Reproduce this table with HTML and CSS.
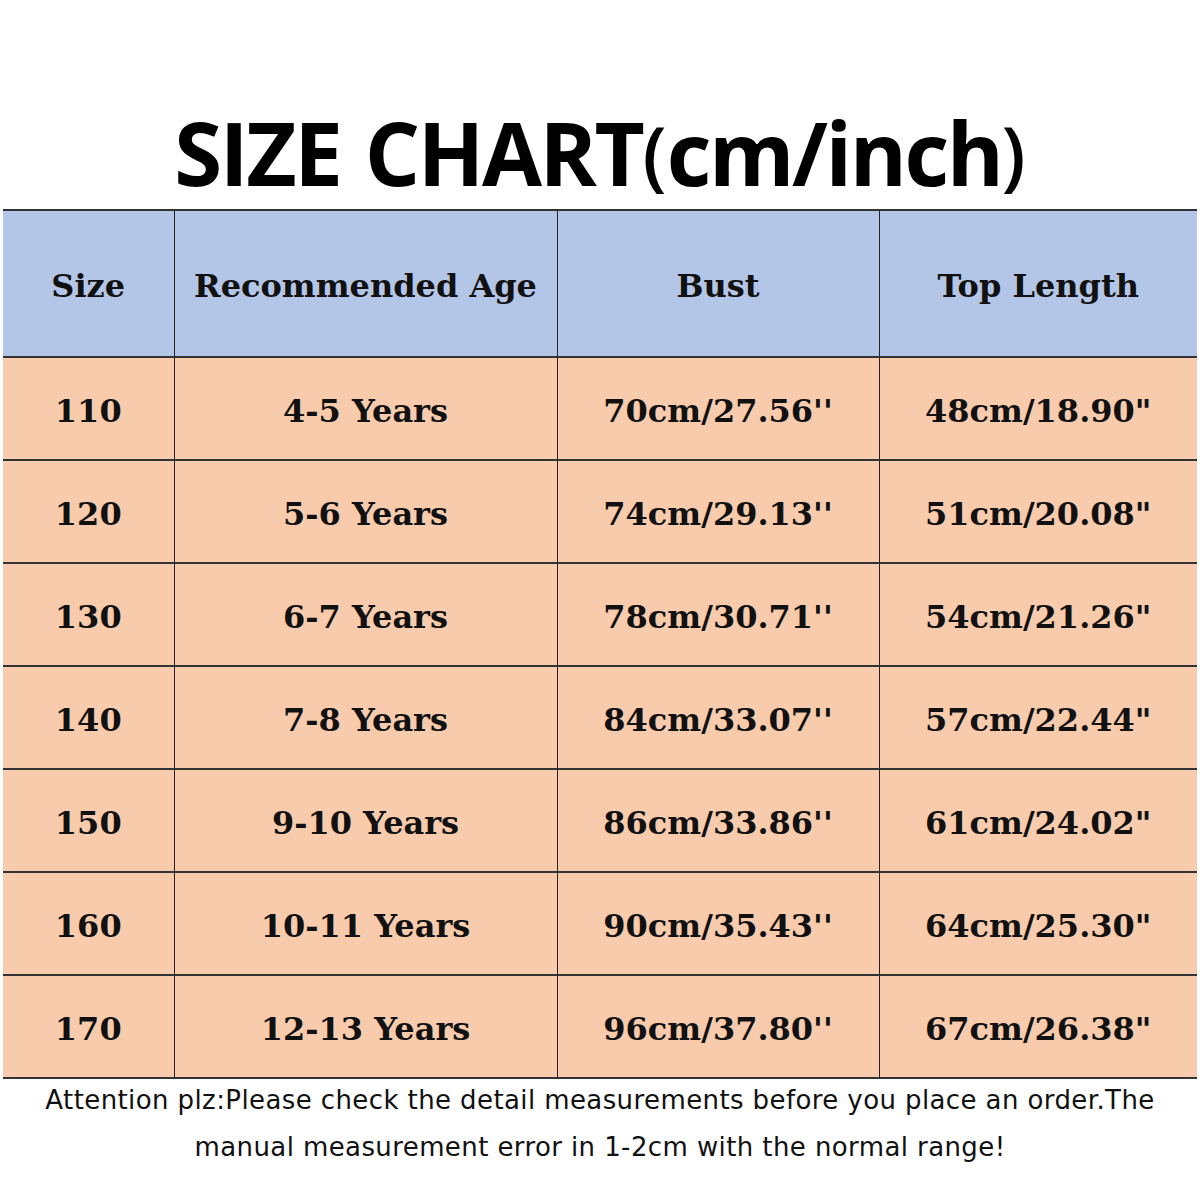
FILE: index.html
```html
<!DOCTYPE html>
<html>
<head>
<meta charset="utf-8">
<link rel="stylesheet" href="styles.css">
</head>
<body>
<div class="page">
  <h1 class="title">SIZE CHART<span class="paren">(</span>cm/inch<span class="paren">)</span></h1>
  <table class="chart">
    <colgroup>
      <col class="c1"><col class="c2"><col class="c3"><col class="c4">
    </colgroup>
    <thead>
      <tr><th>Size</th><th>Recommended Age</th><th>Bust</th><th>Top Length</th></tr>
    </thead>
    <tbody>
      <tr><td>110</td><td>4-5 Years</td><td>70cm/27.56''</td><td>48cm/18.90"</td></tr>
      <tr><td>120</td><td>5-6 Years</td><td>74cm/29.13''</td><td>51cm/20.08"</td></tr>
      <tr><td>130</td><td>6-7 Years</td><td>78cm/30.71''</td><td>54cm/21.26"</td></tr>
      <tr><td>140</td><td>7-8 Years</td><td>84cm/33.07''</td><td>57cm/22.44"</td></tr>
      <tr><td>150</td><td>9-10 Years</td><td>86cm/33.86''</td><td>61cm/24.02"</td></tr>
      <tr><td>160</td><td>10-11 Years</td><td>90cm/35.43''</td><td>64cm/25.30"</td></tr>
      <tr><td>170</td><td>12-13 Years</td><td>96cm/37.80''</td><td>67cm/26.38"</td></tr>
    </tbody>
  </table>
  <p class="note">Attention plz:Please check the detail measurements before you place an order.The<br>manual measurement error in 1-2cm with the normal range!</p>
</div>
</body>
</html>
```
FILE: styles.css
```css
html, body {
  margin: 0;
  padding: 0;
  background: #ffffff;
}
.page {
  width: 1200px;
  height: 1200px;
  padding-top: 106px;
  box-sizing: border-box;
}
.title {
  margin: 0;
  height: 103px;
  text-align: center;
  font-family: "Open Sans", "DejaVu Sans", sans-serif;
  font-weight: 700;
  font-size: 87px;
  line-height: 92px;
  color: #000;
  letter-spacing: -2.4px;
  word-spacing: 4px;
}
.title .paren {
  font-weight: 600;
  font-size: 76px;
  letter-spacing: 0;
  vertical-align: 4px;
}
.chart {
  margin-left: 3px;
  width: 1194px;
  border-collapse: collapse;
  table-layout: fixed;
  font-family: "DejaVu Serif", "Liberation Serif", serif;
  font-weight: 700;
  font-size: 32px;
  color: #111;
}
.c1 { width: 171px; }
.c2 { width: 383px; }
.c3 { width: 322px; }
.c4 { width: 318px; }
.chart th, .chart td {
  text-align: center;
  padding: 5px 0 0 0;
  border-top: 2px solid #333;
  border-bottom: 2px solid #333;
  border-left: 1.5px solid #222;
  border-right: 1.5px solid #222;
}
.chart th:first-child, .chart td:first-child { border-left: none; }
.chart th:last-child, .chart td:last-child { border-right: none; }
.chart th {
  background: #b4c6e7;
  height: 140px;
}
.chart td {
  background: #f8cbad;
  height: 96px;
}
.note {
  margin: -2px 0 0 0;
  text-align: center;
  font-family: "DejaVu Sans", "Open Sans", sans-serif;
  font-size: 26px;
  letter-spacing: 0.4px;
  line-height: 47px;
  color: #111;
}
```
